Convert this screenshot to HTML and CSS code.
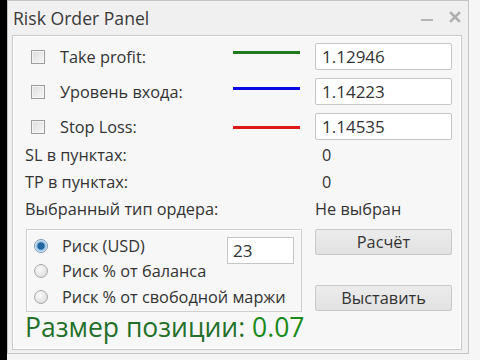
FILE: index.html
```html
<!DOCTYPE html>
<html>
<head>
<meta charset="utf-8">
<link rel="stylesheet" href="styles.css">
</head>
<body>
<div class="strip"></div>
<div class="window">
  <div class="titlebar">
    <span class="title">Risk Order Panel</span>
    <div class="controls">
      <svg class="min" width="12" height="12" viewBox="0 0 12 12"><rect x="0" y="8" width="12" height="2" fill="#b5b5b5"/></svg>
      <svg class="close" width="12" height="12" viewBox="0 0 12 12"><path d="M2 2 L10 10 M10 2 L2 10" stroke="#b0b0b0" stroke-width="2.6" stroke-linecap="square"/></svg>
    </div>
  </div>
  <div class="panel">
    <div class="row tall">
      <div class="lab"><span class="check"></span><span>Take profit:</span></div>
      <div class="linecell"><span class="line green"></span></div>
      <div class="field">1.12946</div>
    </div>
    <div class="row tall">
      <div class="lab"><span class="check"></span><span>Уровень входа:</span></div>
      <div class="linecell"><span class="line blue"></span></div>
      <div class="field">1.14223</div>
    </div>
    <div class="row tall">
      <div class="lab"><span class="check"></span><span>Stop Loss:</span></div>
      <div class="linecell"><span class="line red"></span></div>
      <div class="field">1.14535</div>
    </div>
    <div class="infos">
      <div class="row info">
        <div class="lab">SL в пунктах:</div>
        <div class="linecell"></div>
        <div class="val">0</div>
      </div>
      <div class="row info">
        <div class="lab">TP в пунктах:</div>
        <div class="linecell"></div>
        <div class="val">0</div>
      </div>
      <div class="row info">
        <div class="lab">Выбранный тип ордера:</div>
        <div class="linecell"></div>
        <div class="val wide">Не выбран</div>
      </div>
    </div>
    <div class="bottom">
      <div class="leftcol">
        <div class="group">
          <div class="radios">
            <div class="radio-row"><span class="radio on"></span><span>Риск (USD)</span></div>
            <div class="radio-row"><span class="radio"></span><span>Риск % от баланса</span></div>
            <div class="radio-row"><span class="radio"></span><span>Риск % от свободной маржи</span></div>
          </div>
          <div class="small-field">23</div>
        </div>
        <div class="result">Размер позиции: <span class="num">0.07</span></div>
      </div>
      <div class="buttons">
        <div class="btn">Расчёт</div>
        <div class="btn">Выставить</div>
      </div>
    </div>
  </div>
</div>
<div class="rightside"></div>
</body>
</html>
```

FILE: styles.css
```css
html, body {
  margin: 0;
  padding: 0;
}
body {
  width: 480px;
  height: 360px;
  display: flex;
  background: #f4f4f4;
  font-family: "Open Sans", "DejaVu Sans", sans-serif;
  color: #333;
  overflow: hidden;
}
.strip {
  width: 7px;
  height: 360px;
  background: #000;
  flex: none;
}
.window {
  width: 462px;
  height: 354px;
  box-sizing: border-box;
  border: 1px solid #c4c4c4;
  background: #f0f0f0;
  display: flex;
  flex-direction: column;
  flex: none;
}
.titlebar {
  height: 34px;
  display: flex;
  align-items: center;
  padding-left: 5px;
  flex: none;
}
.title {
  font-size: 17.6px;
  color: #3a3a3a;
}
.controls {
  margin-left: auto;
  display: flex;
  align-items: center;
  gap: 16px;
  margin-right: 7px;
  margin-top: -2px;
}
.panel {
  flex: 1;
  margin: 0 6px 3px 4px;
  border: 1px solid #c9c9c9;
  box-shadow: inset 0 0 0 1px #ffffff;
  background: #f7f7f7;
  padding: 3px 0 0 12px;
  font-size: 16.3px;
}
.row {
  display: grid;
  grid-template-columns: 208px 82px 137px;
  align-items: center;
}
.row.tall { height: 35px; }
.row.info { height: 27px; }
.infos {
  margin-top: -3px;
}
.lab {
  display: flex;
  align-items: center;
  white-space: nowrap;
}
.check {
  width: 12px;
  height: 12px;
  border: 1px solid #9d9d9d;
  background: linear-gradient(135deg, #dcdcdc, #f8f8f8);
  box-shadow: inset 0 0 0 1px #f4f4f4;
  margin-left: 6px;
  margin-right: 15px;
  flex: none;
}
.linecell {
  display: flex;
  align-items: center;
}
.line {
  width: 67px;
  height: 3px;
  display: block;
}
.green { background: #1f7a1f; margin-top: -9px; }
.blue { background: #0a0ae6; margin-top: -6px; }
.red { background: #e01818; margin-top: 1px; }
.field {
  height: 27px;
  box-sizing: border-box;
  border: 1px solid #c6c6c6;
  border-radius: 2px;
  background: #fff;
  padding-left: 6px;
  display: flex;
  align-items: center;
  font-size: 17px;
  color: #333;
}
.val {
  padding-left: 7px;
  white-space: nowrap;
}
.val.wide { padding-left: 0; }
.bottom {
  display: flex;
  margin-top: 7px;
}
.leftcol {
  width: 290px;
  display: flex;
  flex-direction: column;
}
.group {
  width: 276px;
  height: 83px;
  box-sizing: border-box;
  border: 1px solid #cfcfcf;
  box-shadow: inset 1px 1px 0 #fff;
  margin-left: 1px;
  display: flex;
  padding: 3px 0 0 7px;
  position: relative;
}
.radios {
  display: flex;
  flex-direction: column;
}
.radio-row {
  height: 25.5px;
  display: flex;
  align-items: center;
  white-space: nowrap;
}
.radio {
  width: 12px;
  height: 12px;
  border-radius: 50%;
  border: 1px solid #a9a9a9;
  background: radial-gradient(circle at 40% 35%, #fafafa, #d6d6d6);
  margin-right: 14px;
  flex: none;
}
.radio.on {
  background: radial-gradient(circle at 50% 50%, #2a6fa8 0, #1b5f99 3px, #7fb3dc 4px, #e7f1f9 6px);
  border-color: #7a9ab5;
}
.small-field {
  position: absolute;
  left: 200px;
  top: 7px;
  width: 67px;
  height: 27px;
  box-sizing: border-box;
  border: 1px solid #c6c6c6;
  background: #fff;
  padding-left: 5px;
  display: flex;
  align-items: center;
  font-size: 17px;
}
.result {
  font-size: 26.5px;
  line-height: 30px;
  color: #23702a;
  margin-top: 0;
  white-space: nowrap;
}
.result .num { color: #1a8a1a; }
.buttons {
  display: flex;
  flex-direction: column;
  gap: 30px;
  margin-left: 0;
}
.btn {
  width: 137px;
  height: 26px;
  box-sizing: border-box;
  border: 1px solid #c9c9c9;
  border-radius: 2px;
  background: linear-gradient(#ececec, #e2e2e2);
  display: flex;
  align-items: center;
  justify-content: center;
  font-size: 16.3px;
  color: #333;
}
.rightside {
  flex: 1;
  background: #f6f6f6;
}
```
